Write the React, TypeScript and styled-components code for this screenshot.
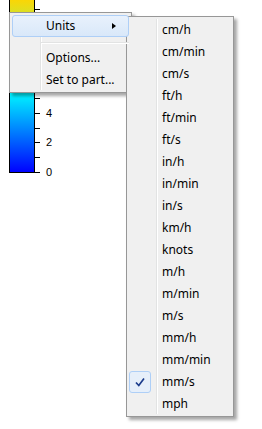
import styled, { createGlobalStyle } from 'styled-components';

const GlobalStyle = createGlobalStyle`
  html, body {
    margin: 0;
    padding: 0;
    background: #ffffff;
  }
`;

const Page = styled.div`
  position: relative;
  width: 262px;
  height: 429px;
  overflow: hidden;
  background: #ffffff;
  font-family: "Noto Sans", "Open Sans", sans-serif;
  font-size: 12px;
  color: #000;
`;

const Legend = styled.svg`
  display: block;
`;

// popup menus lie over the legend, so they are placed absolutely
const Menu = styled.div<{ $left: number; $top: number; $width: number; $gutter: number }>`
  position: absolute;
  left: ${p => p.$left}px;
  top: ${p => p.$top}px;
  width: ${p => p.$width}px;
  box-sizing: border-box;
  padding: 2px 2px 1px;
  display: flex;
  flex-direction: column;
  background: #f0f0f0;
  border: 1px solid #979797;
  box-shadow: 3px 3px 3px rgba(0, 0, 0, 0.35);

  &::before {
    content: '';
    position: absolute;
    top: 2px;
    bottom: 2px;
    left: ${p => p.$gutter}px;
    width: 1px;
    background: #e2e3e3;
    border-right: 1px solid #ffffff;
  }
`;

const Item = styled.div<{ $active?: boolean }>`
  position: relative;
  z-index: 1;
  display: flex;
  align-items: center;
  height: 22px;
  box-sizing: border-box;
  padding-right: 12px;
  border-radius: 3px;
  border: 1px solid ${p => (p.$active ? '#aecff7' : 'transparent')};
  background: ${p => (p.$active ? 'linear-gradient(#e8f1fc, #d9e8f9)' : 'transparent')};
  white-space: nowrap;
`;

const Gutter = styled.span<{ $width: number }>`
  flex: 0 0 ${p => p.$width}px;
  align-self: stretch;
  display: flex;
  margin: -1px 0 -1px -1px;
`;

const Label = styled.span`
  flex: 1;
  line-height: 20px;
  margin-top: -1px;
`;

const Arrow = styled.span`
  width: 0;
  height: 0;
  margin-top: -1px;
  border-left: 4px solid #000;
  border-top: 3.5px solid transparent;
  border-bottom: 3.5px solid transparent;
`;

const Separator = styled.div`
  position: relative;
  z-index: 1;
  height: 1px;
  margin: 5px 0 3px 29px;
  background: #e2e3e3;
  border-bottom: 1px solid #ffffff;
`;

const CheckBox = styled.span`
  width: 22px;
  height: 22px;
  box-sizing: border-box;
  border: 1px solid #aecff7;
  border-radius: 3px;
  background: #e6effa;
  display: flex;
  align-items: center;
  justify-content: center;
`;

const units = [
  'cm/h', 'cm/min', 'cm/s', 'ft/h', 'ft/min', 'ft/s', 'in/h', 'in/min', 'in/s',
  'km/h', 'knots', 'm/h', 'm/min', 'm/s', 'mm/h', 'mm/min', 'mm/s', 'mph',
];

const ticks = Array.from({ length: 12 }, (_, i) => Math.round(172 - i * 14.8) + 0.5);
const labels = [0, 2, 4];

export default function App() {
  return (
    <Page>
      <GlobalStyle />
      <Legend width="80" height="180" viewBox="0 0 80 180">
        <defs>
          <linearGradient id="jet" x1="0" y1="0" x2="0" y2="1">
            <stop offset="0" stopColor="#ffd400" />
            <stop offset="0.3" stopColor="#80ff80" />
            <stop offset="0.55" stopColor="#00f2ff" />
            <stop offset="1" stopColor="#0000ff" />
          </linearGradient>
        </defs>
        <rect x="9.5" y="-2" width="25" height="174.5" fill="url(#jet)" stroke="#000" strokeWidth="1" />
        {ticks.map((y, i) => (
          <line key={i} x1="34" x2="40" y1={y} y2={y} stroke="#000" strokeWidth="1" />
        ))}
        {labels.map((v, i) => (
          <text
            key={v}
            x="46"
            y={ticks[i * 2] + 3.5}
            fontFamily="'Liberation Sans', Arial, sans-serif"
            fontSize="11"
            fill="#000"
          >
            {v}
          </text>
        ))}
      </Legend>

      <Menu $left={9} $top={12} $width={123} $gutter={30}>
        <Item $active>
          <Gutter $width={34} />
          <Label>Units</Label>
          <Arrow />
        </Item>
        <Separator />
        <Item>
          <Gutter $width={34} />
          <Label>Options...</Label>
        </Item>
        <Item>
          <Gutter $width={34} />
          <Label>Set to part...</Label>
        </Item>
      </Menu>

      <Menu $left={126} $top={16} $width={108} $gutter={29}>
        {units.map(u => (
          <Item key={u}>
            <Gutter $width={33}>
              {u === 'mm/s' && (
                <CheckBox>
                  <svg width="12" height="12" viewBox="0 0 12 12">
                    <path d="M2 6.5 L4.8 9.5 L10 2.5" fill="none" stroke="#1c3c8c" strokeWidth="1.7" />
                  </svg>
                </CheckBox>
              )}
            </Gutter>
            <Label>{u}</Label>
          </Item>
        ))}
      </Menu>
    </Page>
  );
}
